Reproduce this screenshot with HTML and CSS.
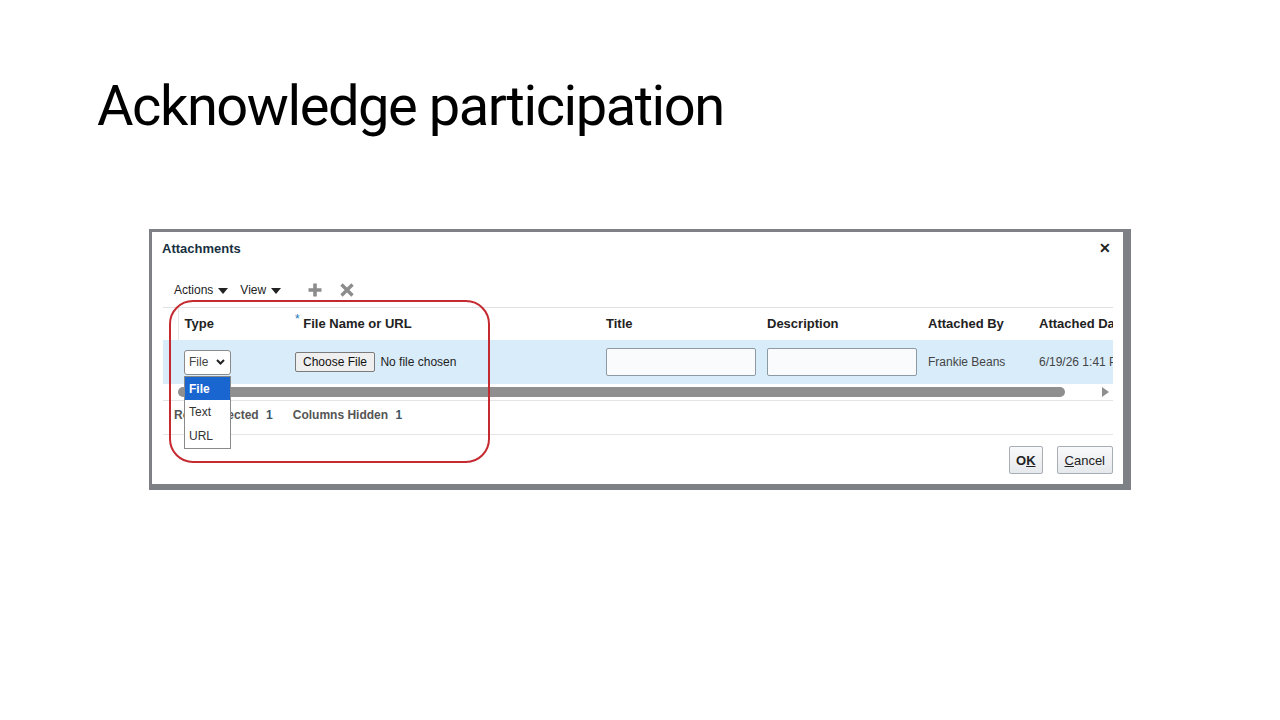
FILE: index.html
```html
<!DOCTYPE html>
<html lang="en">
<head>
    <meta charset="UTF-8">
    <meta name="viewport" content="width=device-width, initial-scale=1.0">
    <title>Acknowledge participation</title>
    <link rel="stylesheet" href="styles.css">
</head>
<body>

<main class="slide">
    <h1 class="slide-title">Acknowledge participation</h1>

    <section class="dialog">
        <header class="dialog-head">
            <h2>Attachments</h2>
            <span class="close-btn">&#x2715;</span>
        </header>

        <div class="toolbar">
            <span class="menu">Actions <i class="caret"></i></span>
            <span class="menu">View <i class="caret"></i></span>
            <svg class="tool-icon" width="16" height="16" viewBox="0 0 16 16">
                <path d="M8 1.5v13M1.5 8h13" stroke="#8c8c8c" stroke-width="3.6"/>
            </svg>
            <svg class="tool-icon" width="16" height="16" viewBox="0 0 16 16">
                <path d="M2.5 2.5l11 11M13.5 2.5l-11 11" stroke="#8c8c8c" stroke-width="3.4"/>
            </svg>
        </div>

        <div class="grid">
            <table class="grid-table">
                <colgroup>
                    <col style="width:15px">
                    <col style="width:113px">
                    <col style="width:309px">
                    <col style="width:161px">
                    <col style="width:161px">
                    <col style="width:111px">
                    <col style="width:200px">
                </colgroup>
                <thead>
                    <tr>
                        <th class="sel"></th>
                        <th>Type</th>
                        <th class="file-col"><span class="req">*</span> File Name or URL</th>
                        <th>Title</th>
                        <th>Description</th>
                        <th>Attached By</th>
                        <th>Attached Date</th>
                    </tr>
                </thead>
                <tbody>
                    <tr class="selected">
                        <td class="sel"></td>
                        <td>
                            <div class="type-select">File
                                <svg width="9" height="6" viewBox="0 0 9 6"><path d="M1 1l3.5 3.5L8 1" fill="none" stroke="#222" stroke-width="2"/></svg>
                            </div>
                        </td>
                        <td class="file-col">
                            <span class="file-btn">Choose File</span>
                            <span class="file-none">No file chosen</span>
                        </td>
                        <td><div class="text-input"></div></td>
                        <td><div class="text-input"></div></td>
                        <td class="plain">Frankie Beans</td>
                        <td class="plain">6/19/26 1:41 PM</td>
                    </tr>
                </tbody>
            </table>
        </div>

        <div class="hscroll">
            <div class="thumb"></div>
            <i class="arrow-right"></i>
        </div>

        <div class="status">
            <span>Rows Selected <b>1</b></span>
            <span>Columns Hidden <b>1</b></span>
        </div>

        <footer class="dialog-foot">
            <button class="btn btn-ok">O<u>K</u></button>
            <button class="btn"><u>C</u>ancel</button>
        </footer>

        <!-- open list of the Type select -->
        <ul class="type-menu">
            <li class="active">File</li>
            <li>Text</li>
            <li>URL</li>
        </ul>

        <div class="callout"></div>
    </section>
</main>

</body>
</html>
```

FILE: styles.css
```css
body {
    margin: 0;
    background: #fff;
}

.slide {
    width: 1280px;
    height: 720px;
    padding: 74px 0 0 97px;
    box-sizing: border-box;
}

.slide-title {
    margin: 0;
    font-family: Roboto, sans-serif;
    font-weight: 400;
    font-size: 56px;
    line-height: 64px;
    color: #000;
    letter-spacing: -1.45px;
}

/* dialog */

.dialog {
    position: relative;
    margin: 91px 0 0 52px;
    width: 971px;
    background: #fff;
    border: 3px solid #7d8185;
    border-right-width: 8px;
    border-bottom-width: 6px;
    font-family: "Liberation Sans", Arial, sans-serif;
    font-size: 12px;
    color: #333;
}

.dialog-head {
    height: 32px;
    display: flex;
    align-items: center;
    justify-content: space-between;
    padding: 0 12px 0 10px;
}

.dialog-head h2 {
    margin: 0;
    font-size: 13px;
    font-weight: bold;
    color: #17303f;
}

.close-btn {
    font-size: 14px;
    font-weight: bold;
    color: #222;
}

.toolbar {
    height: 43px;
    display: flex;
    align-items: center;
    padding: 9px 0 0 22px;
    box-sizing: border-box;
    gap: 12px;
    color: #222;
}

.menu {
    display: inline-flex;
    align-items: center;
    gap: 5px;
}

.caret {
    width: 0;
    height: 0;
    border-left: 5px solid transparent;
    border-right: 5px solid transparent;
    border-top: 6px solid #222;
    margin-top: 2px;
}

.tool-icon:first-of-type {
    margin-left: 14px;
}

.tool-icon + .tool-icon {
    margin-left: 4px;
}

/* table */

.grid {
    margin: 0 10px 0 11px;
    overflow: hidden;
    border-top: 1px solid #dfe1e3;
}

.grid-table {
    width: 1070px;
    table-layout: fixed;
    border-collapse: collapse;
}

.grid-table th {
    height: 30px;
    padding: 0 6px 2px;
    text-align: left;
    font-size: 13px;
    font-weight: bold;
    color: #222;
    white-space: nowrap;
    overflow: hidden;
}

.grid-table th.sel {
    border-right: 1px solid #e4e6e8;
    padding: 0;
}

.grid-table td {
    height: 44px;
    padding: 0 6px;
    white-space: nowrap;
    overflow: hidden;
}

.grid-table td.sel {
    padding: 0;
}

.grid-table .file-col {
    padding-left: 4px;
}

.req {
    position: relative;
    top: -5px;
    color: #1b74b8;
    font-size: 12px;
    font-weight: normal;
}

.selected td {
    background: #d9ecfa;
}

.type-select {
    width: 47px;
    height: 25px;
    box-sizing: border-box;
    border: 1px solid #8a8a8a;
    border-radius: 3px;
    background: #fff;
    display: flex;
    align-items: center;
    justify-content: space-between;
    padding: 0 5px 0 4px;
    color: #444;
}

.file-btn {
    display: inline-block;
    padding: 2px 7px;
    border: 1px solid #7b7b7b;
    border-radius: 2px;
    background: #efefef;
    color: #111;
}

.file-none {
    margin-left: 2px;
    color: #222;
}

.text-input {
    width: 150px;
    height: 28px;
    box-sizing: border-box;
    border: 1px solid #8d99a3;
    border-radius: 2px;
    background: #f9fbfd;
}

.plain {
    color: #444;
}

/* horizontal scrollbar */

.hscroll {
    margin: 0 10px 0 11px;
    height: 16px;
    border-bottom: 1px solid #e2e4e6;
    display: flex;
    align-items: center;
}

.thumb {
    margin-left: 15px;
    width: 887px;
    height: 10px;
    border-radius: 5px;
    background: #8f8f8f;
}

.arrow-right {
    margin-left: 37px;
    width: 0;
    height: 0;
    border-top: 5px solid transparent;
    border-bottom: 5px solid transparent;
    border-left: 7px solid #8f8f8f;
}

.status {
    margin: 0 10px 0 11px;
    height: 34px;
    padding: 0 0 6px 11px;
    box-sizing: border-box;
    border-bottom: 1px solid #e2e4e6;
    display: flex;
    align-items: center;
    gap: 20px;
    font-weight: bold;
    color: #555;
}

.status b {
    margin-left: 4px;
    color: #3d5566;
}

.dialog-foot {
    height: 49px;
    display: flex;
    justify-content: flex-end;
    align-items: flex-start;
    gap: 14px;
    padding: 11px 10px 0 0;
    box-sizing: border-box;
}

.btn {
    height: 28px;
    padding: 0 7px;
    border: 1px solid #a7aeb5;
    border-radius: 2px;
    background: linear-gradient(#f8f9fa, #e6e9ec);
    font-family: "Liberation Sans", Arial, sans-serif;
    font-size: 13px;
    color: #222;
}

.btn-ok {
    padding: 0 6px;
    font-weight: bold;
}

/* dropdown list, drawn over the grid */

.type-menu {
    position: absolute;
    left: 32px;
    top: 144px;
    width: 47px;
    margin: 0;
    padding: 0;
    list-style: none;
    box-sizing: border-box;
    border: 1px solid #8a8a8a;
    background: #fff;
}

.type-menu li {
    height: 24px;
    line-height: 24px;
    padding-left: 4px;
    color: #333;
}

.type-menu li.active {
    height: 23px;
    background: #1a66d0;
    color: #fff;
    font-weight: bold;
}

/* red rounded annotation */

.callout {
    position: absolute;
    left: 17px;
    top: 68px;
    width: 321px;
    height: 163px;
    box-sizing: border-box;
    border: 2px solid #c42a30;
    border-radius: 24px;
    pointer-events: none;
}
```
